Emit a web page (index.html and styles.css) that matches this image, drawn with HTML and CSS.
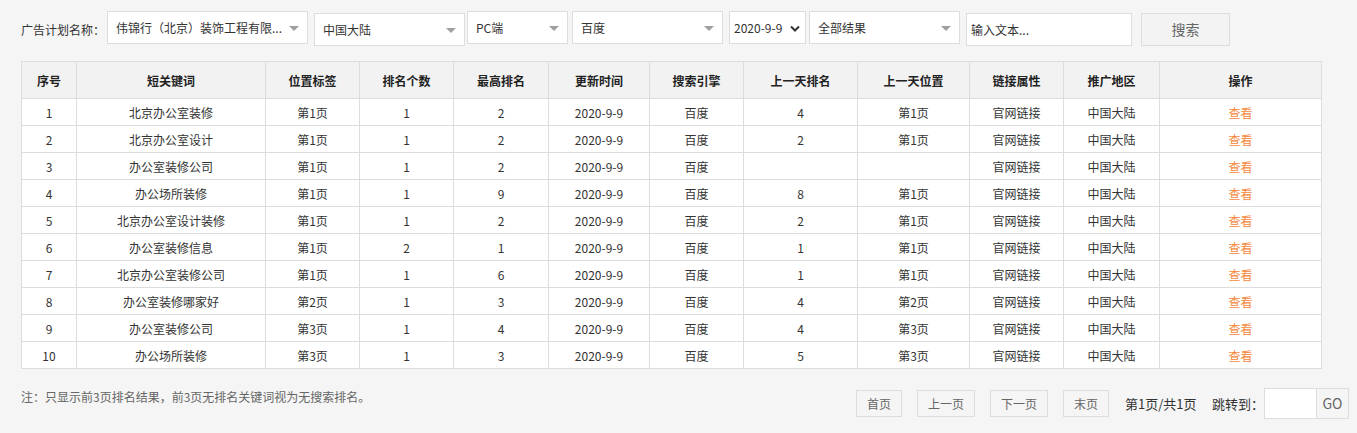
FILE: index.html
```html
<!DOCTYPE html>
<html lang="zh-CN">
<head>
<meta charset="utf-8">
<title>关键词排名</title>
<link rel="stylesheet" href="styles.css">
</head>
<body>
<div class="toolbar">
  <span class="label low">广告计划名称：</span>
  <div class="sel w201">伟锦行（北京）装饰工程有限...<i class="tri"></i></div>
  <div class="sel w151 low g6">中国大陆<i class="tri"></i></div>
  <div class="sel w101 g2">PC端<i class="tri"></i></div>
  <div class="sel w151 g4">百度<i class="tri"></i></div>
  <div class="sel date g6">2020-9-9<svg class="chev" width="10" height="7" viewBox="0 0 10 7"><path d="M1 1.5 L5 5.5 L9 1.5" fill="none" stroke="#333" stroke-width="2"/></svg></div>
  <div class="sel w151 g3">全部结果<i class="tri"></i></div>
  <div class="inp low g6">输入文本...</div>
  <div class="btn low g9">搜索</div>
</div>

<table class="grid">
  <colgroup>
    <col style="width:55px"><col style="width:189px"><col style="width:94px"><col style="width:94px">
    <col style="width:95px"><col style="width:101px"><col style="width:94px"><col style="width:114px">
    <col style="width:112px"><col style="width:94px"><col style="width:96px"><col style="width:162px">
  </colgroup>
  <thead>
    <tr><th>序号</th><th>短关键词</th><th>位置标签</th><th>排名个数</th><th>最高排名</th><th>更新时间</th><th>搜索引擎</th><th>上一天排名</th><th>上一天位置</th><th>链接属性</th><th>推广地区</th><th>操作</th></tr>
  </thead>
  <tbody>
    <tr><td>1</td><td>北京办公室装修</td><td>第1页</td><td>1</td><td>2</td><td>2020-9-9</td><td>百度</td><td>4</td><td>第1页</td><td>官网链接</td><td>中国大陆</td><td><a class="view">查看</a></td></tr>
    <tr><td>2</td><td>北京办公室设计</td><td>第1页</td><td>1</td><td>2</td><td>2020-9-9</td><td>百度</td><td>2</td><td>第1页</td><td>官网链接</td><td>中国大陆</td><td><a class="view">查看</a></td></tr>
    <tr><td>3</td><td>办公室装修公司</td><td>第1页</td><td>1</td><td>2</td><td>2020-9-9</td><td>百度</td><td></td><td></td><td>官网链接</td><td>中国大陆</td><td><a class="view">查看</a></td></tr>
    <tr><td>4</td><td>办公场所装修</td><td>第1页</td><td>1</td><td>9</td><td>2020-9-9</td><td>百度</td><td>8</td><td>第1页</td><td>官网链接</td><td>中国大陆</td><td><a class="view">查看</a></td></tr>
    <tr><td>5</td><td>北京办公室设计装修</td><td>第1页</td><td>1</td><td>2</td><td>2020-9-9</td><td>百度</td><td>2</td><td>第1页</td><td>官网链接</td><td>中国大陆</td><td><a class="view">查看</a></td></tr>
    <tr><td>6</td><td>办公室装修信息</td><td>第1页</td><td>2</td><td>1</td><td>2020-9-9</td><td>百度</td><td>1</td><td>第1页</td><td>官网链接</td><td>中国大陆</td><td><a class="view">查看</a></td></tr>
    <tr><td>7</td><td>北京办公室装修公司</td><td>第1页</td><td>1</td><td>6</td><td>2020-9-9</td><td>百度</td><td>1</td><td>第1页</td><td>官网链接</td><td>中国大陆</td><td><a class="view">查看</a></td></tr>
    <tr><td>8</td><td>办公室装修哪家好</td><td>第2页</td><td>1</td><td>3</td><td>2020-9-9</td><td>百度</td><td>4</td><td>第2页</td><td>官网链接</td><td>中国大陆</td><td><a class="view">查看</a></td></tr>
    <tr><td>9</td><td>办公室装修公司</td><td>第3页</td><td>1</td><td>4</td><td>2020-9-9</td><td>百度</td><td>4</td><td>第3页</td><td>官网链接</td><td>中国大陆</td><td><a class="view">查看</a></td></tr>
    <tr><td>10</td><td>办公场所装修</td><td>第3页</td><td>1</td><td>3</td><td>2020-9-9</td><td>百度</td><td>5</td><td>第3页</td><td>官网链接</td><td>中国大陆</td><td><a class="view">查看</a></td></tr>
  </tbody>
</table>

<div class="footer">
  <p class="note">注：只显示前3页排名结果，前3页无排名关键词视为无搜索排名。</p>
  <div class="pager">
    <span class="pbtn w46">首页</span>
    <span class="pbtn w58">上一页</span>
    <span class="pbtn w58">下一页</span>
    <span class="pbtn w46 last">末页</span>
    <span class="ptext">第1页/共1页</span>
    <span class="ptext jump">跳转到：</span>
    <span class="jinp"></span>
    <span class="go">GO</span>
  </div>
</div>
</body>
</html>
```

FILE: styles.css
```css
* { box-sizing: border-box; }
html, body {
  margin: 0;
  padding: 0;
  background: #f5f5f5;
  font-family: "Noto Sans CJK SC", "Microsoft YaHei", sans-serif;
  font-size: 12px;
  color: #333;
}
.toolbar {
  display: flex;
  align-items: flex-start;
  padding: 11px 0 0 21px;
  height: 61px;
}
.label {
  width: 86px;
  height: 33px;
  line-height: 33px;
  white-space: nowrap;
}
.low { margin-top: 2px; }
.g2 { margin-left: 2px; }
.g3 { margin-left: 3px; }
.g4 { margin-left: 4px; }
.g6 { margin-left: 6px; }
.g9 { margin-left: 9px; }
.sel {
  position: relative;
  height: 33px;
  line-height: 31px;
  background: #fff;
  border: 1px solid #ddd;
  padding-left: 8px;
  white-space: nowrap;
  overflow: hidden;
}
.w201 { width: 201px; }
.w151 { width: 151px; }
.w101 { width: 101px; }
.date { width: 77px; padding-left: 4px; }
.tri {
  position: absolute;
  right: 8px;
  top: 14px;
  width: 0;
  height: 0;
  border-left: 5px solid transparent;
  border-right: 5px solid transparent;
  border-top: 5px solid #a0a0a0;
}
.chev {
  position: absolute;
  right: 5px;
  top: 13px;
}
.inp {
  width: 166px;
  height: 33px;
  line-height: 31px;
  background: #fff;
  border: 1px solid #ddd;
  padding-left: 4px;
  color: #333;
}
.btn {
  width: 89px;
  height: 33px;
  line-height: 31px;
  text-align: center;
  border: 1px solid #ddd;
  background: #f3f3f3;
  color: #666;
  font-size: 14px;
}
.grid {
  margin-left: 21px;
  width: 1300px;
  table-layout: fixed;
  border-collapse: collapse;
  background: #fff;
}
.grid th, .grid td {
  border: 1px solid #ddd;
  text-align: center;
  padding: 0;
  white-space: nowrap;
}
.grid th {
  height: 37px;
  background: #f2f2f2;
  font-weight: bold;
  color: #222;
}
.grid td {
  height: 27px;
}
.view {
  color: #f5883d;
  cursor: pointer;
}
.footer {
  display: flex;
  justify-content: space-between;
  align-items: flex-start;
  padding: 0 8px 0 21px;
  margin-top: 19px;
}
.note {
  margin: 0;
  line-height: 18px;
  color: #666;
}
.pager {
  display: flex;
  align-items: center;
  height: 31px;
}
.pbtn {
  height: 27px;
  line-height: 25px;
  border: 1px solid #ddd;
  text-align: center;
  color: #666;
  margin-right: 15px;
}
.pbtn.last { margin-right: 16px; }
.w46 { width: 46px; }
.w58 { width: 58px; }
.ptext {
  display: inline-block;
  width: 72px;
  margin-right: 15px;
  color: #333;
  font-size: 13px;
  white-space: nowrap;
}
.ptext.jump {
  width: 52px;
  margin-right: 0;
}
.jinp {
  width: 53px;
  height: 31px;
  background: #fff;
  border: 1px solid #ddd;
}
.go {
  width: 32px;
  height: 31px;
  line-height: 29px;
  border: 1px solid #ddd;
  border-left: none;
  text-align: center;
  color: #666;
  font-size: 14px;
}
```
